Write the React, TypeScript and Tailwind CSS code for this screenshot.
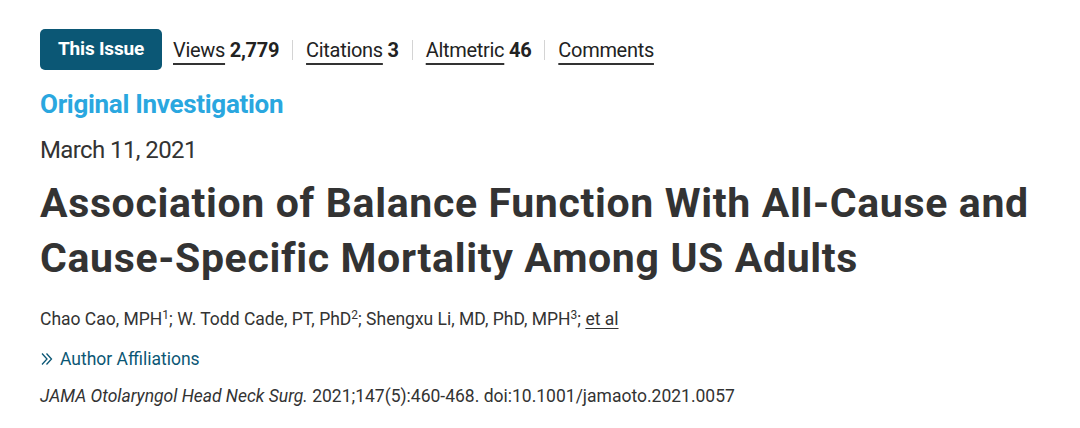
import React from "react";

const font = { fontFamily: "Roboto, 'Noto Sans', sans-serif" };

function Metric({ label, value }: { label: string; value?: string }) {
  return (
    <span>
      <span className="underline decoration-[#333] decoration-[1.5px] underline-offset-[6px]">{label}</span>
      {value && <span className="font-bold"> {value}</span>}
    </span>
  );
}

function Sep() {
  return <span className="mx-[13px] h-[20px] w-px bg-[#d4d4d4]" />;
}

export default function App() {
  return (
    <div className="h-[428px] w-[1080px] bg-white pl-10 pt-[29px] text-[#333]" style={font}>
      <div className="flex h-[41px] items-center">
        <span className="flex h-[41px] w-[122px] items-center justify-center rounded-[5px] bg-[#0b5775] text-[19px] font-bold tracking-[-0.2px] text-white">
          This Issue
        </span>
        <div className="ml-[11px] flex items-center text-[20px] tracking-[-0.3px] text-[#222]">
          <Metric label="Views" value="2,779" />
          <Sep />
          <Metric label="Citations" value="3" />
          <Sep />
          <Metric label="Altmetric" value="46" />
          <Sep />
          <Metric label="Comments" />
        </div>
      </div>

      <div className="mt-[18px] text-[26px] font-bold leading-[32px] tracking-[-0.3px] text-[#2aa7df]">
        Original Investigation
      </div>
      <div className="mt-[15px] text-[24px] leading-[30px] tracking-[-0.6px] text-[#333]">March 11, 2021</div>

      <h1 className="mt-[11px] text-[41px] font-bold leading-[55px] tracking-[0.65px] text-[#333]">
        Association of Balance Function With All-Cause and
        <br />
        Cause-Specific Mortality Among US Adults
      </h1>

      <div className="mt-[21px] text-[17.5px] leading-[24px] text-[#333]">
        Chao Cao, MPH<sup className="text-[12px]">1</sup>; W. Todd Cade, PT, PhD<sup className="text-[12px]">2</sup>; Shengxu Li, MD, PhD,
        MPH<sup className="text-[12px]">3</sup>; <span className="underline underline-offset-[3px]">et al</span>
      </div>

      <div className="mt-[16px] flex items-center text-[17.5px] leading-[24px] text-[#0b5775]">
        <svg width="14" height="14" viewBox="0 0 14 14" className="mr-[6px]" fill="none" stroke="#0b5775" strokeWidth="1.3">
          <path d="M2 1.5l5 5.5-5 5.5M6.5 1.5l5 5.5-5 5.5" />
        </svg>
        Author Affiliations
      </div>

      <div className="mt-[13px] text-[17.5px] leading-[24px] text-[#333]">
        <i>JAMA Otolaryngol Head Neck Surg.</i> 2021;147(5):460-468. doi:10.1001/jamaoto.2021.0057
      </div>
    </div>
  );
}
